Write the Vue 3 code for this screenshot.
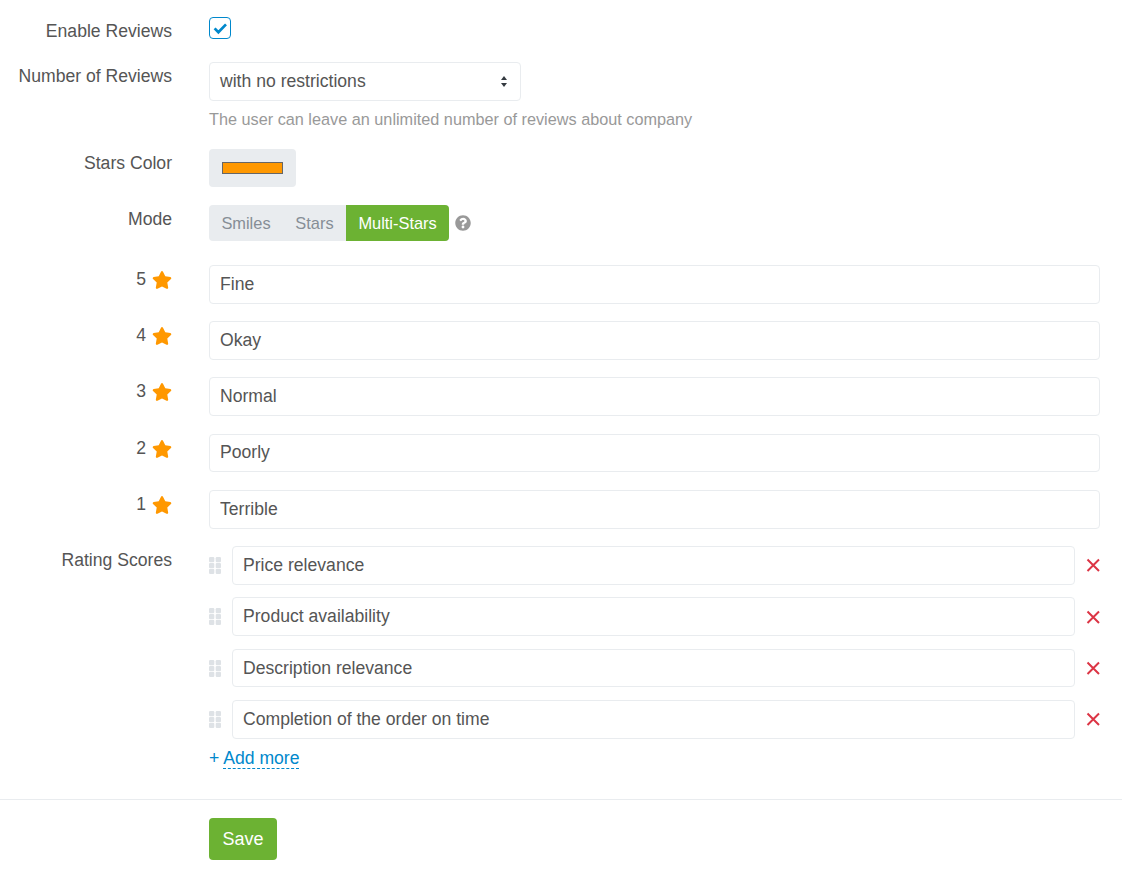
<script setup>
import { ref } from 'vue'

const modes = ['Smiles', 'Stars', 'Multi-Stars']
const activeMode = ref('Multi-Stars')
const enabled = ref(true)

const starLabels = ref([
  { stars: 5, text: 'Fine' },
  { stars: 4, text: 'Okay' },
  { stars: 3, text: 'Normal' },
  { stars: 2, text: 'Poorly' },
  { stars: 1, text: 'Terrible' }
])

const scores = ref([
  'Price relevance',
  'Product availability',
  'Description relevance',
  'Completion of the order on time'
])

const removeScore = (index) => {
  scores.value.splice(index, 1)
}

const addScore = () => {
  scores.value.push('')
}
</script>

<template>
  <main class="form">
    <section class="fields">
      <div class="row row-enable">
        <label class="label">Enable Reviews</label>
        <button class="checkbox" type="button" @click="enabled = !enabled">
          <svg v-if="enabled" viewBox="0 0 22 22" width="22" height="22">
            <path d="M5.6 11.4l3.8 3.9 7.6-7.9" fill="none" stroke="#0088cc" stroke-width="2.7" />
          </svg>
        </button>
      </div>

      <div class="row row-number">
        <label class="label">Number of Reviews</label>
        <div>
          <div class="select">
            <span>with no restrictions</span>
            <svg viewBox="0 0 6 11" width="6" height="11">
              <path d="M3 0l3 4H0zM3 11L0 7h6z" fill="#343a40" />
            </svg>
          </div>
          <p class="help">The user can leave an unlimited number of reviews about company</p>
        </div>
      </div>

      <div class="row row-color">
        <label class="label">Stars Color</label>
        <button class="color" type="button"><span class="swatch"></span></button>
      </div>

      <div class="row row-mode">
        <label class="label">Mode</label>
        <div class="mode">
          <div class="tabs">
            <button
              v-for="mode in modes"
              :key="mode"
              type="button"
              :class="['tab', { active: activeMode === mode }]"
              @click="activeMode = mode"
            >{{ mode }}</button>
          </div>
          <svg class="hint" viewBox="0 0 512 512" width="16" height="16">
            <path fill="#999" d="M504 256c0 136.997-111.043 248-248 248S8 392.997 8 256C8 119.083 119.043 8 256 8s248 111.083 248 248zM262.655 90c-54.497 0-89.255 22.957-116.549 63.758-3.536 5.286-2.353 12.415 2.715 16.258l34.699 26.31c5.205 3.947 12.621 3.008 16.665-2.122 17.864-22.658 30.113-35.797 57.303-35.797 20.429 0 45.698 13.148 45.698 32.958 0 14.976-12.363 22.667-32.534 33.976C247.128 238.528 216 254.941 216 296v4c0 6.627 5.373 12 12 12h56c6.627 0 12-5.373 12-12v-1.333c0-28.462 83.186-29.647 83.186-106.667 0-58.002-60.165-102-116.531-102zM256 338c-25.365 0-46 20.635-46 46 0 25.364 20.635 46 46 46s46-20.636 46-46c0-25.365-20.635-46-46-46z" />
          </svg>
        </div>
      </div>

      <div v-for="item in starLabels" :key="item.stars" class="row row-star">
        <label class="label star-label">
          <span>{{ item.stars }}</span>
          <svg viewBox="0 0 576 512" width="20" height="18">
            <path fill="#ff9800" d="M259.3 17.8L194 150.2 47.9 171.5c-26.2 3.8-36.7 36.1-17.7 54.6l105.7 103-25 145.5c-4.5 26.3 23.2 46 46.4 33.7L288 439.6l130.7 68.7c23.2 12.2 50.9-7.4 46.4-33.7l-25-145.5 105.7-103c19-18.5 8.5-50.8-17.7-54.6L382 150.2 316.7 17.8c-11.7-23.6-45.6-23.9-57.4 0z" />
          </svg>
        </label>
        <input v-model="item.text" class="input" type="text" />
      </div>

      <div class="row">
        <label class="label">Rating Scores</label>
        <div>
          <div v-for="(score, index) in scores" :key="index" class="score">
            <svg class="grip" viewBox="0 0 12 17" width="12" height="17">
              <g fill="#dee2e6">
                <rect x="0" y="0" width="5.3" height="5.2" rx="1.2" />
                <rect x="6.7" y="0" width="5.3" height="5.2" rx="1.2" />
                <rect x="0" y="5.9" width="5.3" height="5.2" rx="1.2" />
                <rect x="6.7" y="5.9" width="5.3" height="5.2" rx="1.2" />
                <rect x="0" y="11.8" width="5.3" height="5.2" rx="1.2" />
                <rect x="6.7" y="11.8" width="5.3" height="5.2" rx="1.2" />
              </g>
            </svg>
            <input v-model="scores[index]" class="input" type="text" />
            <button class="remove" type="button" @click="removeScore(index)">
              <svg viewBox="0 0 14 14" width="14" height="14">
                <path d="M1.5 1.5l11.5 11.5M13 1.5L1.5 13" fill="none" stroke="#dc3545" stroke-width="2" />
              </svg>
            </button>
          </div>
          <div class="add">+ <a href="#" @click.prevent="addScore">Add more</a></div>
        </div>
      </div>
    </section>

    <footer class="actions">
      <button class="save" type="button">Save</button>
    </footer>
  </main>
</template>

<style scoped>
* {
  box-sizing: border-box;
}

.form {
  width: 1122px;
  font-family: 'Liberation Sans', Arial, sans-serif;
  font-size: 17.6px;
  line-height: 27px;
  color: #555;
}

.fields {
  padding: 17px 22px 0 0;
}

.row {
  display: grid;
  grid-template-columns: 172px 1fr;
  column-gap: 37px;
}

.label {
  padding-top: 1px;
  text-align: right;
  white-space: nowrap;
}

.row-enable {
  height: 45px;
}

.checkbox {
  width: 22px;
  height: 22px;
  padding: 0;
  border: 1px solid #0088cc;
  border-radius: 4px;
  background: #fff;
  display: block;
}

.checkbox svg {
  display: block;
  margin: -1px;
}

.row-number {
  height: 87px;
}

.select {
  width: 312px;
  height: 39px;
  padding: 0 13px 0 10px;
  border: 1px solid #e9ecef;
  border-radius: 4px;
  display: flex;
  align-items: center;
  justify-content: space-between;
}

.help {
  margin: 5px 0 0;
  font-size: 16.25px;
  line-height: 27px;
  color: #999;
}

.row-color {
  height: 56px;
}

.color {
  width: 87px;
  height: 38px;
  padding: 0;
  border: 0;
  border-radius: 4px;
  background: #e9ecef;
  display: flex;
  align-items: center;
  justify-content: center;
}

.swatch {
  width: 61px;
  height: 12px;
  background: #ff9800;
  border: 1px solid #666;
}

.row-mode {
  height: 59.9px;
}

.mode {
  display: flex;
  align-items: flex-start;
}

.tabs {
  display: flex;
  height: 36px;
  border-radius: 4px;
  background: #e9ecef;
  overflow: hidden;
}

.tab {
  height: 36px;
  padding: 1px 12.4px 0;
  border: 0;
  background: transparent;
  font-family: inherit;
  font-size: 16.4px;
  color: #868e96;
}

.tab.active {
  background: #6cb233;
  color: #fff;
}

.hint {
  margin: 10px 0 0 6px;
}

.row-star {
  height: 56.25px;
}

.star-label {
  display: flex;
  justify-content: flex-end;
  align-items: center;
  gap: 6px;
  height: 30px;
  padding: 0;
}

.star-label span {
  margin-bottom: 1px;
}

.input {
  display: block;
  width: 100%;
  height: 38.7px;
  padding: 0 10px;
  border: 1px solid #e9ecef;
  border-radius: 4px;
  background: #fff;
  outline: none;
  font-family: inherit;
  font-size: 17.6px;
  color: #555;
}

.score {
  display: flex;
  align-items: center;
  height: 38.7px;
  margin-bottom: 12.6px;
}

.grip {
  flex: none;
  margin-right: 11px;
}

.remove {
  flex: none;
  width: 25px;
  height: 14px;
  padding: 0;
  border: 0;
  background: transparent;
  display: flex;
  justify-content: flex-end;
}

.add {
  margin-top: -6.6px;
  color: #0088cc;
}

.add a {
  color: #0088cc;
  text-decoration: none;
  border-bottom: 1px dashed #0088cc;
}

.actions {
  margin-top: 27px;
  padding: 18px 0 17px 209px;
  border-top: 1px solid #e9ecef;
}

.save {
  display: block;
  width: 68px;
  height: 42px;
  padding: 1px 0 0;
  border: 0;
  border-radius: 4px;
  background: #6cb233;
  color: #fff;
  font-family: inherit;
  font-size: 18px;
}
</style>
